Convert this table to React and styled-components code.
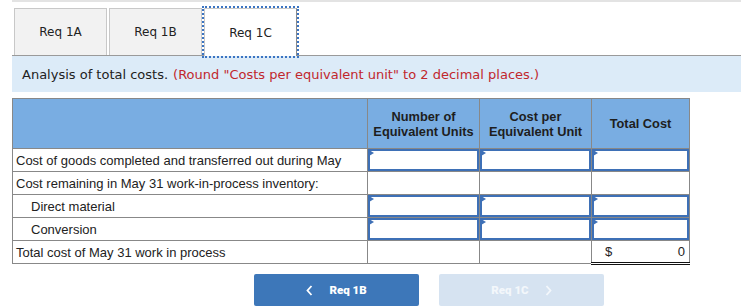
import React from "react";
import styled, { createGlobalStyle } from "styled-components";

const GlobalStyle = createGlobalStyle`
  html, body {
    margin: 0;
    padding: 0;
    background: #ffffff;
  }
`;

const Page = styled.div`
  width: 741px;
  height: 308px;
  overflow: hidden;
  padding-left: 12px;
  box-sizing: border-box;
`;

const Wrap = styled.div`
  border-top: 2px solid #e3e3e3;
`;

const TabBar = styled.div`
  display: flex;
  gap: 2px;
  padding: 6px 0 0 2px;
  border-bottom: 1px solid #9a9a9a;
  height: 47px;
`;

const Tab = styled.div`
  width: 93px;
  height: ${(p) => (p.$active ? "48px" : "47px")};
  box-sizing: border-box;
  display: flex;
  align-items: center;
  justify-content: center;
  font-family: "DejaVu Sans", Verdana, sans-serif;
  font-size: 12px;
  color: #222;
  background: ${(p) => (p.$active ? "#ffffff" : "#f2f2f2")};
  border: 1px solid #c8c8c8;
  border-bottom: none;
  border-right-color: ${(p) => (p.$active ? "#8a8a8a" : "#c8c8c8")};
  outline: ${(p) => (p.$active ? "2px dotted #3b74c2" : "none")};
  outline-offset: 0;
  position: relative;
  z-index: ${(p) => (p.$active ? 1 : 0)};
`;

const Info = styled.div`
  height: 36px;
  background: #dcebf8;
  display: flex;
  align-items: center;
  padding-left: 10px;
  font-family: "DejaVu Sans", Verdana, sans-serif;
  font-size: 13px;
  color: #222;
`;

const Red = styled.span`
  color: #c1272d;
  margin-left: 5px;
`;

const Table = styled.table`
  margin-top: 6px;
  border-collapse: collapse;
  font-family: "Liberation Sans", Arial, sans-serif;
  font-size: 13px;
  color: #222;
  table-layout: fixed;
`;

const Th = styled.th`
  background: #79ade2;
  border: 1px solid #888;
  height: 49px;
  padding: 0;
  font-weight: bold;
  font-size: 12.8px;
  line-height: 15px;
  color: #1e1e1e;
  text-align: center;
  width: ${(p) => p.$w}px;
`;

const Td = styled.td`
  border: 1px solid #888;
  height: 23px;
  padding: 0 0 0 ${(p) => (p.$indent ? 18 : 3)}px;
  white-space: nowrap;
  box-sizing: border-box;
`;

const InputTd = styled.td`
  border: 1px solid #888;
  height: 23px;
  padding: 0;
  box-sizing: border-box;
`;

const Field = styled.div`
  position: relative;
  height: 22px;
  box-sizing: border-box;
  border: 2px solid #3e70b6;
  background: #fff;
  &::before {
    content: "";
    position: absolute;
    left: -1px;
    top: -1px;
    border-top: 3px solid transparent;
    border-bottom: 3px solid transparent;
    border-left: 5px solid #3e70b6;
  }
`;

const TotalTd = styled.td`
  border: 1px solid #888;
  border-bottom: 3px double #111;
  height: 23px;
  padding: 0 4px 0 13px;
  box-sizing: border-box;
`;

const TotalInner = styled.div`
  display: flex;
  justify-content: space-between;
`;

const Buttons = styled.div`
  display: flex;
  gap: 20px;
  margin-top: 9px;
  padding-left: 242px;
`;

const NavButton = styled.div`
  width: 165px;
  height: 32px;
  border-radius: 2px;
  background: ${(p) => (p.$disabled ? "#d6e3f1" : "#3d77b9")};
  color: ${(p) => (p.$disabled ? "#f3f7fb" : "#ffffff")};
  display: flex;
  align-items: center;
  justify-content: center;
  gap: 16px;
  font-family: "Roboto", "Liberation Sans", sans-serif;
  font-weight: 900;
  font-size: 11.5px;
`;

const Chevron = ({ dir }) => (
  <svg width="7" height="11" viewBox="0 0 7 11">
    <path
      d={dir === "left" ? "M5.5 1 L1.5 5.5 L5.5 10" : "M1.5 1 L5.5 5.5 L1.5 10"}
      fill="none"
      stroke="currentColor"
      strokeWidth="1.8"
    />
  </svg>
);

const rows = [
  { label: "Cost of goods completed and transferred out during May", input: true },
  { label: "Cost remaining in May 31 work-in-process inventory:", input: false },
  { label: "Direct material", input: true, indent: true },
  { label: "Conversion", input: true, indent: true },
];

export default function App() {
  return (
    <>
      <GlobalStyle />
      <Page>
        <Wrap>
          <TabBar>
            <Tab>Req 1A</Tab>
            <Tab>Req 1B</Tab>
            <Tab $active>Req 1C</Tab>
          </TabBar>
          <Info>
            Analysis of total costs.
            <Red>(Round "Costs per equivalent unit" to 2 decimal places.)</Red>
          </Info>
          <Table>
            <thead>
              <tr>
                <Th $w={354} />
                <Th $w={111}>
                  Number of
                  <br />
                  Equivalent Units
                </Th>
                <Th $w={111}>
                  Cost per
                  <br />
                  Equivalent Unit
                </Th>
                <Th $w={97}>Total Cost</Th>
              </tr>
            </thead>
            <tbody>
              {rows.map((r) => (
                <tr key={r.label}>
                  <Td $indent={r.indent}>{r.label}</Td>
                  {[0, 1, 2].map((i) =>
                    r.input ? (
                      <InputTd key={i}>
                        <Field />
                      </InputTd>
                    ) : (
                      <Td key={i} />
                    )
                  )}
                </tr>
              ))}
              <tr>
                <Td>Total cost of May 31 work in process</Td>
                <Td />
                <Td />
                <TotalTd>
                  <TotalInner>
                    <span>$</span>
                    <span>0</span>
                  </TotalInner>
                </TotalTd>
              </tr>
            </tbody>
          </Table>
          <Buttons>
            <NavButton>
              <Chevron dir="left" />
              <span>Req 1B</span>
            </NavButton>
            <NavButton $disabled>
              <span>Req 1C</span>
              <Chevron dir="right" />
            </NavButton>
          </Buttons>
        </Wrap>
      </Page>
    </>
  );
}
